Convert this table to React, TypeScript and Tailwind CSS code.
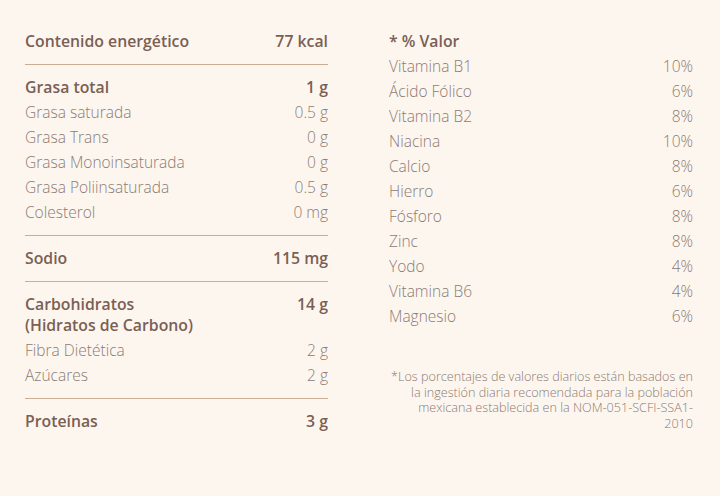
const font = { fontFamily: '"Open Sans", "Liberation Sans", sans-serif' };

type Row = { label: string; value: string; bold?: boolean };

const sections: Row[][] = [
  [{ label: 'Contenido energético', value: '77 kcal', bold: true }],
  [
    { label: 'Grasa total', value: '1 g', bold: true },
    { label: 'Grasa saturada', value: '0.5 g' },
    { label: 'Grasa Trans', value: '0 g' },
    { label: 'Grasa Monoinsaturada', value: '0 g' },
    { label: 'Grasa Poliinsaturada', value: '0.5 g' },
    { label: 'Colesterol', value: '0 mg' },
  ],
  [{ label: 'Sodio', value: '115 mg', bold: true }],
  [
    { label: 'Carbohidratos (Hidratos de Carbono)', value: '14 g', bold: true },
    { label: 'Fibra Dietética', value: '2 g' },
    { label: 'Azúcares', value: '2 g' },
  ],
  [{ label: 'Proteínas', value: '3 g', bold: true }],
];

const vitamins = [
  ['Vitamina B1', '10%'],
  ['Ácido Fólico', '6%'],
  ['Vitamina B2', '8%'],
  ['Niacina', '10%'],
  ['Calcio', '8%'],
  ['Hierro', '6%'],
  ['Fósforo', '8%'],
  ['Zinc', '8%'],
  ['Yodo', '4%'],
  ['Vitamina B6', '4%'],
  ['Magnesio', '6%'],
];

function NutriRow({ row }: { row: Row }) {
  if (row.label.startsWith('Carbohidratos')) {
    return (
      <div className="flex justify-between py-[2px] text-[15.8px] leading-[21px] font-semibold text-[#7a5f55]">
        <span>
          Carbohidratos
          <br />
          (Hidratos de Carbono)
        </span>
        <span>{row.value}</span>
      </div>
    );
  }
  return (
    <div
      className={
        'flex justify-between leading-[25px] ' +
        (row.bold ? 'text-[15.8px] font-semibold text-[#7a5f55]' : 'text-[15.5px] font-light text-[#8b7b74]')
      }
    >
      <span>{row.label}</span>
      <span>{row.value}</span>
    </div>
  );
}

export default function App() {
  return (
    <div className="w-[720px] h-[496px] bg-[#fdf6ef] flex pl-[25px] pr-[27px] pt-[29px] gap-[61px]" style={font}>
      <div className="w-[303px] flex flex-col">
        {sections.map((sec, i) => (
          <div
            key={i}
            className={
              (i === 0 ? 'pb-[10px] ' : 'py-[10px] ') +
              (i < sections.length - 1 ? 'border-b border-[#c9ad96]' : '')
            }
          >
            {sec.map((r) => (
              <NutriRow key={r.label} row={r} />
            ))}
          </div>
        ))}
      </div>
      <div className="flex-1 flex flex-col">
        <div className="text-[15.8px] leading-[25px] font-semibold text-[#7a5f55]">* % Valor</div>
        {vitamins.map(([name, pct]) => (
          <div key={name} className="flex justify-between text-[15.5px] leading-[25px] font-light text-[#8b7b74]">
            <span>{name}</span>
            <span>{pct}</span>
          </div>
        ))}
        <p className="mt-[40px] -ml-[12px] whitespace-nowrap text-right text-[12.6px] leading-[15.5px] font-light text-[#8b7b74]">
          *Los porcentajes de valores diarios están basados en
          <br />
          la ingestión diaria recomendada para la población
          <br />
          mexicana establecida en la NOM-051-SCFI-SSA1-
          <br />
          2010
        </p>
      </div>
    </div>
  );
}
